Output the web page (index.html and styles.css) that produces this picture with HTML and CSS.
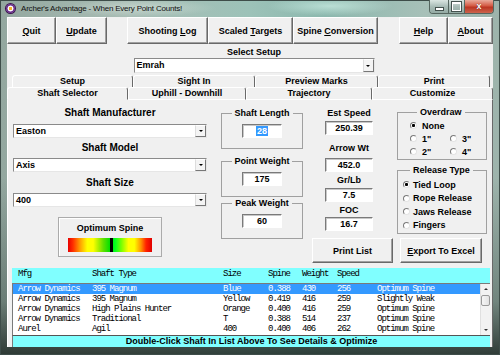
FILE: index.html
```html
<!DOCTYPE html>
<html lang="en">
<head>
<meta charset="utf-8">
<title>Archer's Advantage</title>
<link rel="stylesheet" href="styles.css">
</head>
<body>
<div class="window">
  <header class="titlebar">
    <span class="app-icon"></span>
    <span class="title">Archer's Advantage - When Every Point Counts!</span>
    <div class="controls">
      <span class="ctl ctl-min"></span>
      <span class="ctl ctl-max"></span>
      <span class="ctl ctl-close">x</span>
    </div>
  </header>
  <main class="client">
    <nav class="toolbar">
      <div class="tbtn btn-quit"><span><u>Q</u>uit</span></div>
      <div class="tbtn btn-update"><span><u>U</u>pdate</span></div>
      <div class="tspacer sp-a"></div>
      <div class="tbtn btn-log"><span>Shooting <u>L</u>og</span></div>
      <div class="tbtn btn-targets"><span>Scaled <u>T</u>argets</span></div>
      <div class="tbtn btn-spine"><span>Spine <u>C</u>onversion</span></div>
      <div class="tspacer sp-b"></div>
      <div class="tbtn btn-help"><span><u>H</u>elp</span></div>
      <div class="tbtn btn-about"><span><u>A</u>bout</span></div>
    </nav>

    <section class="setup">
      <div class="setup-label">Select Setup</div>
      <div class="combo combo-setup"><span class="combo-text">Emrah</span><span class="combo-btn"></span></div>
    </section>

    <div class="tabs tabs-back">
      <div class="tab tab-setup">Setup</div>
      <div class="tab tab-sight">Sight In</div>
      <div class="tab tab-preview">Preview Marks</div>
      <div class="tab tab-print">Print</div>
    </div>
    <div class="tabs tabs-front">
      <div class="tab tab-shaft active">Shaft Selector</div>
      <div class="tab tab-uphill">Uphill - Downhill</div>
      <div class="tab tab-traj">Trajectory</div>
      <div class="tab tab-custom">Customize</div>
    </div>

    <section class="panel">
      <div class="panel-top">
        <div class="col-shaft">
          <div class="shaft-label lbl-mfr">Shaft Manufacturer</div>
          <div class="combo combo-wide"><span class="combo-text">Easton</span><span class="combo-btn"></span></div>
          <div class="shaft-label lbl-model">Shaft Model</div>
          <div class="combo combo-wide"><span class="combo-text">Axis</span><span class="combo-btn"></span></div>
          <div class="shaft-label lbl-size">Shaft Size</div>
          <div class="combo combo-wide"><span class="combo-text">400</span><span class="combo-btn"></span></div>
          <div class="spinebox">
            <div class="spine-label">Optimum Spine</div>
            <div class="spine-bar"><span class="spine-mark"></span></div>
          </div>
        </div>

        <div class="col-groups">
          <fieldset class="grp">
            <legend>Shaft Length</legend>
            <div class="field field-small"><span class="sel">28</span></div>
          </fieldset>
          <fieldset class="grp grp-point">
            <legend>Point Weight</legend>
            <div class="field field-small">175</div>
          </fieldset>
          <fieldset class="grp">
            <legend>Peak Weight</legend>
            <div class="field field-small">60</div>
          </fieldset>
        </div>

        <div class="col-right">
          <div class="right-top">
            <div class="col-stats">
              <div class="stat-label">Est Speed</div>
              <div class="field field-stat st-1">250.39</div>
              <div class="stat-label sl-2">Arrow Wt</div>
              <div class="field field-stat st-2">452.0</div>
              <div class="stat-label sl-3">Gr/Lb</div>
              <div class="field field-stat st-3">7.5</div>
              <div class="stat-label sl-4">FOC</div>
              <div class="field field-stat st-4">16.7</div>
            </div>
            <div class="col-options">
              <fieldset class="opt-grp overdraw">
                <legend>Overdraw</legend>
                <div class="radio radio-full"><span class="rdot on"></span>None</div>
                <div class="radio"><span class="rdot"></span>1"</div>
                <div class="radio"><span class="rdot"></span>3"</div>
                <div class="radio"><span class="rdot"></span>2"</div>
                <div class="radio"><span class="rdot"></span>4"</div>
              </fieldset>
              <fieldset class="opt-grp release">
                <legend>Release Type</legend>
                <div class="radio"><span class="rdot on"></span>Tied Loop</div>
                <div class="radio"><span class="rdot"></span>Rope Release</div>
                <div class="radio"><span class="rdot"></span>Jaws Release</div>
                <div class="radio"><span class="rdot"></span>Fingers</div>
              </fieldset>
            </div>
          </div>
          <div class="actions">
            <div class="pbtn btn-printlist"><span>Print List</span></div>
            <div class="pbtn btn-export"><span><u>E</u>xport To Excel</span></div>
          </div>
        </div>
      </div>

      <div class="list">
        <div class="list-head row-grid">
          <span>Mfg</span><span>Shaft Type</span><span>Size</span><span>Spine</span><span>Weight</span><span>Speed</span><span></span>
        </div>
        <div class="list-body">
          <div class="rows">
            <div class="row row-grid selected"><span>Arrow Dynamics</span><span>395 Magnum</span><span>Blue</span><span>0.388</span><span>430</span><span>256</span><span>Optimum Spine</span></div>
            <div class="row row-grid"><span>Arrow Dynamics</span><span>395 Magnum</span><span>Yellow</span><span>0.419</span><span>416</span><span>259</span><span>Slightly Weak</span></div>
            <div class="row row-grid"><span>Arrow Dynamics</span><span>High Plains Hunter</span><span>Orange</span><span>0.400</span><span>416</span><span>259</span><span>Optimum Spine</span></div>
            <div class="row row-grid"><span>Arrow Dynamics</span><span>Traditional</span><span>T</span><span>0.388</span><span>514</span><span>237</span><span>Optimum Spine</span></div>
            <div class="row row-grid"><span>Aurel</span><span>Agil</span><span>400</span><span>0.400</span><span>406</span><span>262</span><span>Optimum Spine</span></div>
          </div>
          <div class="vscroll">
            <span class="sb-btn sb-up"></span>
            <span class="sb-track"><span class="sb-thumb"></span></span>
            <span class="sb-btn sb-down"></span>
          </div>
        </div>
      </div>
      <div class="status">Double-Click Shaft In List Above To See Details &amp; Optimize</div>
    </section>
  </main>
</div>
</body>
</html>
```

FILE: styles.css
```css
* { box-sizing: border-box; margin: 0; padding: 0; }
html, body { width: 500px; height: 355px; overflow: hidden; }
body { font-family: "Liberation Sans", Arial, sans-serif; color: #000; background: #5d7a72; }

/* ---------- window frame ---------- */
.window {
  width: 500px; height: 355px;
  display: flex; flex-direction: column;
  padding: 0 7px 8px;
  background:
    radial-gradient(ellipse 90px 14px at 330px 6px, rgba(215,248,238,.6), transparent 70%),
    radial-gradient(ellipse 110px 12px at 140px 8px, rgba(228,238,230,.45), transparent 70%),
    linear-gradient(180deg, rgba(0,0,0,0) 0, rgba(0,0,0,0) 50%, rgba(30,45,40,.35) 85%, rgba(20,30,26,.8) 100%),
    linear-gradient(90deg, #93a79f 0, #a9bdb5 25%, #9cc2b8 50%, #8cb8ae 65%, #a7c0b8 85%, #9db3ab 100%);
  box-shadow: inset 0 0 0 1px #3e4d49;
}
.titlebar { height: 17px; margin: 0 -7px; padding-left: 6px; display: flex; align-items: flex-start; flex: none; }
.app-icon {
  width: 9px; height: 9px; margin-top: 4px; border-radius: 50%; flex: none;
  background: radial-gradient(circle, #f5b030 0 22%, #fff 30% 42%, #6b2a8c 52% 100%);
  box-shadow: 0 0 0 1px #3b1550;
}
.title { margin-left: 6px; font-size: 8px; letter-spacing: -.2px; line-height: 17px; color: #111; }
.controls {
  margin-left: auto; margin-right: 6px; display: flex; height: 14px;
  border: 1px solid #55665f; border-top: 0; border-radius: 0 0 4px 4px; overflow: hidden;
}
.ctl { display: flex; align-items: center; justify-content: center; height: 100%; }
.ctl-min { width: 19px; background: linear-gradient(#dae6e2, #a9bdb7 50%, #94aba4); border-right: 1px solid #55665f; }
.ctl-min::after { content: ""; width: 7px; height: 2px; background: #fff; box-shadow: 0 0 0 1px #44524e; margin-top: 5px; }
.ctl-max { width: 16px; background: linear-gradient(#dae6e2, #a9bdb7 50%, #94aba4); border-right: 1px solid #55665f; }
.ctl-max::after { content: ""; width: 7px; height: 6px; border: 1px solid #fff; border-top-width: 2px; box-shadow: 0 0 0 1px #44524e; }
.ctl-close {
  width: 28px; color: #fff; font-weight: bold; font-size: 9px; line-height: 1;
  background: linear-gradient(#e9ab9c, #d45a44 45%, #bb3522 55%, #cc644d);
  text-shadow: 0 0 1px #400;
}

/* ---------- client ---------- */
.client { flex: 1; min-height: 0; background: #f0f0f0; display: flex; flex-direction: column; }

.toolbar { display: flex; height: 27px; flex: none; }
.tbtn {
  display: flex; align-items: center; justify-content: center;
  font-weight: bold; font-size: 9px; white-space: nowrap;
  border: 1px solid; border-color: #fff #696969 #696969 #fff;
  box-shadow: inset -1px -1px #a0a0a0;
}
.btn-quit { width: 49px; }
.btn-update { width: 51px; }
.sp-a { width: 20px; }
.btn-log { width: 81px; }
.btn-targets { width: 85px; }
.btn-spine { width: 85px; }
.sp-b { width: 21px; }
.btn-help { width: 49px; }
.btn-about { width: 45px; }

.setup { display: flex; flex-direction: column; align-items: center; padding-left: 8px; margin-top: 2px; flex: none; }
.setup-label { font-weight: bold; font-size: 9px; line-height: 12px; }

.combo {
  display: flex; height: 14px; background: #fff;
  border: 1px solid; border-color: #8a8a8a #e6e6e6 #e6e6e6 #8a8a8a;
}
.combo-setup { width: 241px; height: 15px; }
.combo-text { flex: 1; font-weight: bold; font-size: 9px; line-height: 12px; padding-left: 2px; }
.combo-btn {
  width: 11px; background: #f4f4f4; display: flex; align-items: center; justify-content: center;
  border: 1px solid; border-color: #fff #777 #777 #ddd;
}
.combo-btn::after { content: ""; border-left: 2px solid transparent; border-right: 2px solid transparent; border-top: 2px solid #000; }

/* ---------- tabs ---------- */
.tabs { display: flex; flex: none; }
.tabs-back { padding-left: 5px; height: 12px; margin-top: 2px; }
.tabs-front { height: 13px; }
.tab {
  font-weight: bold; font-size: 9px; text-align: center; line-height: 11px; white-space: nowrap;
  border: 1px solid; border-color: #fff #696969 transparent #fff; border-bottom-width: 0;
  border-radius: 3px 3px 0 0; background: #f0f0f0;
}
.tabs-front .tab { border-bottom: 1px solid #fff; }
.tabs-front .tab.active { border-bottom-color: #f0f0f0; }
.tab-setup { width: 121px; }
.tab-sight { width: 122px; }
.tab-preview { width: 123px; }
.tab-print { width: 112px; }
.tab-shaft { width: 121px; }
.tab-uphill { width: 118px; }
.tab-traj { width: 126px; }
.tab-custom { width: 121px; }

/* ---------- panel ---------- */
.panel {
  flex: 1; min-height: 0; display: flex; flex-direction: column;
  border-left: 1px solid #fff; border-right: 1px solid #696969;
  padding: 7px 0 0 4px;
}
.panel-top { display: flex; align-items: flex-start; flex: none; }

.col-shaft { width: 194px; margin-left: 1px; display: flex; flex-direction: column; }
.shaft-label { font-weight: bold; font-size: 10px; line-height: 12px; text-align: center; }
.lbl-mfr { margin-bottom: 5px; }
.lbl-model { margin-top: 4px; margin-bottom: 4px; }
.lbl-size { margin-top: 5px; margin-bottom: 4px; }
.spinebox {
  align-self: center; width: 104px; height: 40px; margin-top: 10px; padding: 4px 9px 0;
  border: 1px solid #ababab; box-shadow: inset 1px 1px #fff;
}
.spine-label { font-weight: bold; font-size: 9px; line-height: 12px; text-align: center; }
.spine-bar {
  height: 14px; margin-top: 4px; display: flex; justify-content: center;
  background: linear-gradient(90deg, #e80000 0%, #ff3000 6%, #ff9a00 14%, #ffff00 23%, #ffff00 30%, #60e000 42%, #00e000 50%, #00ff20 56%, #80ff00 64%, #ffff00 72%, #ffff00 79%, #ff9000 87%, #ff2000 93%, #e00000 100%);
}
.spine-mark { width: 3px; height: 100%; background: #000; margin-left: 2px; }

.col-groups { width: 82px; margin-left: 14px; display: flex; flex-direction: column; }
.grp { border: 1px solid #a0a0a0; padding: 5px 0 10px; min-width: 0; }
.grp-point { margin-top: 6px; }
.grp legend, .opt-grp legend { font-weight: bold; font-size: 9px; line-height: 12px; padding: 0 3px; }
.grp legend { margin: 0 auto; }

.field {
  height: 14px; background: #fff; font-weight: bold; font-size: 9px; line-height: 12px; text-align: center;
  border: 1px solid; border-color: #7a7a7a #fff #fff #7a7a7a; box-shadow: inset 1px 1px #c8c8c8;
}
.field-small { width: 40px; margin: 0 auto; }
.sel { background: #3399ff; color: #fff; padding: 0 1px; }

.col-right { width: 175px; margin-left: 9px; display: flex; flex-direction: column; }
.right-top { display: flex; align-items: flex-start; }
.col-stats { width: 48px; margin-left: 13px; display: flex; flex-direction: column; }
.stat-label { font-weight: bold; font-size: 9px; line-height: 12px; text-align: center; white-space: nowrap; }
.field-stat { width: 48px; }
.st-1 { margin-top: 2px; }
.sl-2 { margin-top: 7px; }
.st-2 { margin-top: 4px; }
.sl-3 { margin-top: 2px; }
.st-3 { margin-top: 2px; }
.sl-4 { margin-top: 2px; }
.st-4 { margin-top: 1px; }

.col-options { width: 90px; margin-left: 24px; display: flex; flex-direction: column; }
.opt-grp { border: 1px solid #a0a0a0; min-width: 0; }
.opt-grp legend { margin-left: 7px; }
.overdraw { margin-top: -1px; padding: 1px 0 1px 12px; display: grid; grid-template-columns: 40px 36px; }
.radio-full { grid-column: 1 / 3; }
.release { margin-top: 4px; padding: 2px 0 1px 5px; }
.radio { display: flex; align-items: center; height: 13px; font-weight: bold; font-size: 9px; white-space: nowrap; }
.release .radio { height: 13.5px; }
.rdot {
  width: 7px; height: 7px; border-radius: 50%; flex: none; margin-right: 5px;
  background: #fff; border: 1px solid; border-color: #7a7a7a #e4e4e4 #e4e4e4 #7a7a7a;
}
.release .rdot { margin-right: 3px; }
.rdot.on { background: radial-gradient(circle, #000 0 1.3px, #fff 1.8px); }

.actions { display: flex; gap: 7px; margin-top: 4px; }
.pbtn {
  height: 25px; display: flex; align-items: center; justify-content: center;
  font-weight: bold; font-size: 9px; white-space: nowrap;
  border: 1px solid; border-color: #fff #696969 #696969 #fff; box-shadow: inset -1px -1px #a0a0a0;
}
.btn-printlist { width: 81px; }
.btn-export { width: 82px; }

/* ---------- list ---------- */
.list { width: 478px; margin-top: 5px; background: #80ffff; flex: none; }
.row-grid {
  display: grid; grid-template-columns: 74px 131px 45px 34px 35px 40px 1fr;
  font-family: "Liberation Mono", "Courier New", monospace; font-size: 9px; letter-spacing: -1px;
  white-space: nowrap;
}
.list-head { height: 15px; padding: 1px 0 0 6px; line-height: 10px; }
.list-body {
  display: flex; height: 52px; background: #fff;
  border-top: 1px solid #7a7a7a; border-left: 1px solid #7a7a7a;
}
.rows { flex: 1; display: flex; flex-direction: column; }
.row { height: 10px; line-height: 10px; padding-left: 5px; }
.row.selected { background: #3399ff; color: #fff; }
.vscroll { width: 10px; display: flex; flex-direction: column; background: #f2f2f2; border-left: 1px solid #e0e0e0; }
.sb-btn { height: 10px; display: flex; align-items: center; justify-content: center; flex: none; }
.sb-up::after { content: ""; border-left: 2px solid transparent; border-right: 2px solid transparent; border-bottom: 2px solid #333; }
.sb-down::after { content: ""; border-left: 2px solid transparent; border-right: 2px solid transparent; border-top: 2px solid #333; }
.sb-track { flex: 1; padding-top: 1px; }
.sb-thumb { display: block; height: 11px; background: linear-gradient(90deg, #f6f6f6, #e2e2e2); border: 1px solid #9a9a9a; border-radius: 2px; }

.status {
  width: 478px; height: 12px; flex: none;
  background: #80ffff; border-top: 1px solid #555; border-left: 1px solid #7a7a7a;
  font-weight: bold; font-size: 9px; line-height: 11px; text-align: center; white-space: nowrap;
}
```
